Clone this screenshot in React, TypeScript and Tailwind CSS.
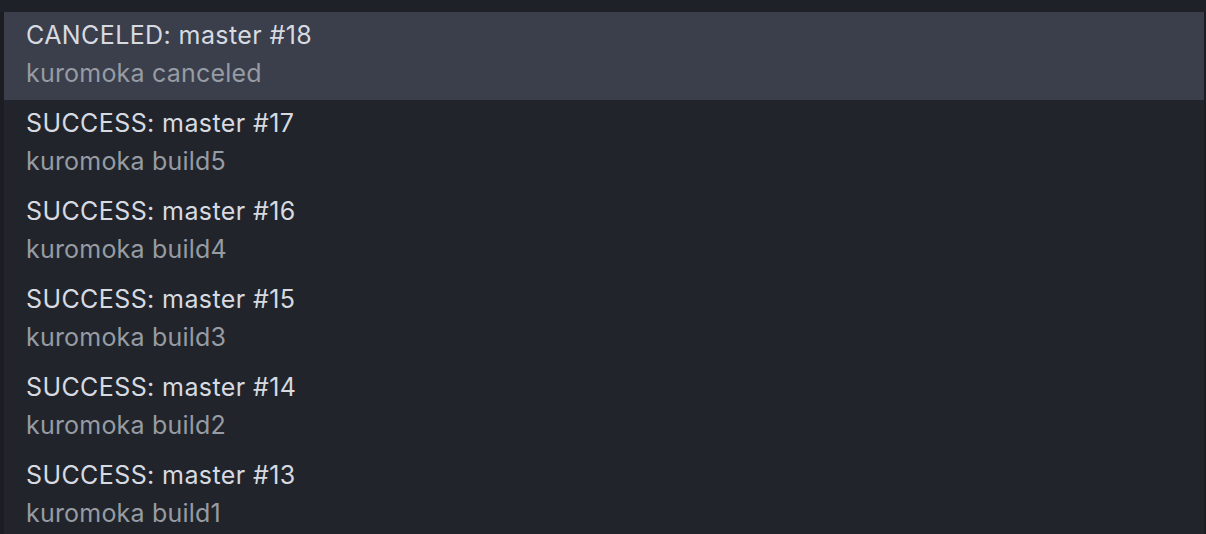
const builds = [
  { title: "CANCELED: master #18", sub: "kuromoka canceled", selected: true },
  { title: "SUCCESS: master #17", sub: "kuromoka build5" },
  { title: "SUCCESS: master #16", sub: "kuromoka build4" },
  { title: "SUCCESS: master #15", sub: "kuromoka build3" },
  { title: "SUCCESS: master #14", sub: "kuromoka build2" },
  { title: "SUCCESS: master #13", sub: "kuromoka build1" },
];

export default function App() {
  return (
    <div
      className="w-[1206px] h-[534px] overflow-hidden bg-[#1e2127] flex flex-col"
      style={{ fontFamily: "Inter, 'Noto Sans', sans-serif" }}
    >
      <div className="h-[12px] shrink-0 bg-[#1e2127]" />
      <div className="flex-1 flex bg-[#1b1d23]">
        <div className="w-[4px] shrink-0 bg-[#1b1d23]" />
        <ul className="flex-1 bg-[#21252b]">
          {builds.map((b) => (
            <li
              key={b.title}
              className={`h-[88px] pl-[22px] pt-[4px] ${b.selected ? "bg-[#3a3f4b]" : ""}`}
            >
              <div className="text-[25px] tracking-[0.4px] leading-[38px] text-[#d7dae0]">{b.title}</div>
              <div className="text-[25px] tracking-[0.2px] leading-[38px] text-[#979ba3]">{b.sub}</div>
            </li>
          ))}
        </ul>
        <div className="w-[2px] shrink-0 bg-[#1b1d23]" />
      </div>
    </div>
  );
}
